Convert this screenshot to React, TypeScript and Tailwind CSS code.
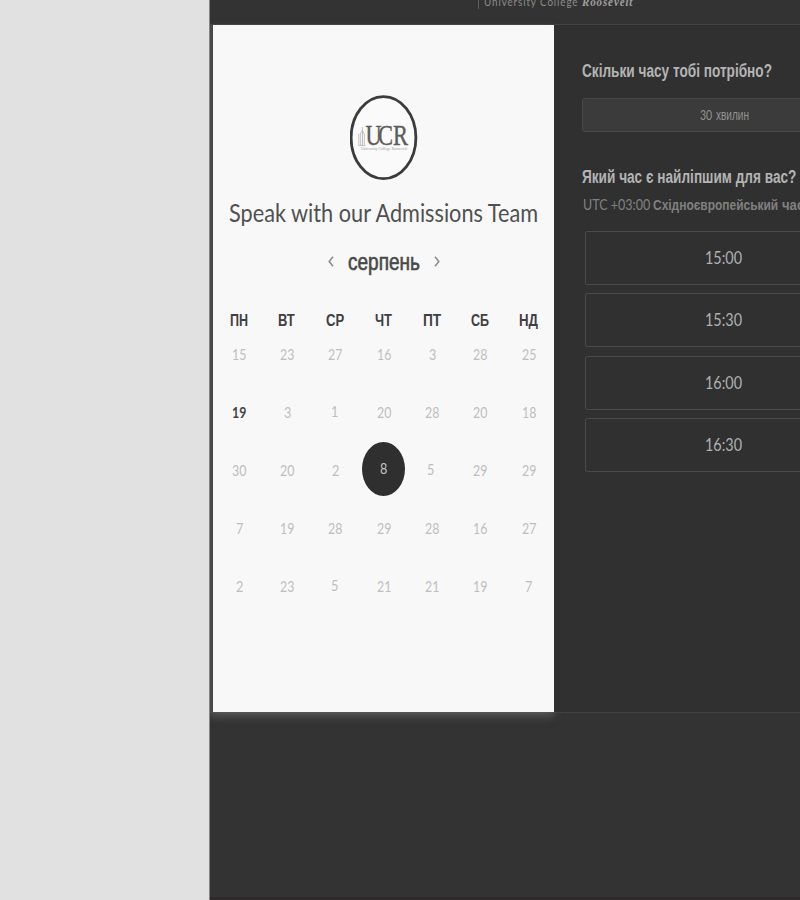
import { useLayoutEffect, useRef, useState, type ReactNode } from "react";

/** Condenses a line of text so that it takes exactly `w` pixels. */
function Fit({ w, className = "", children }: { w: number; className?: string; children: ReactNode }) {
  const ref = useRef<HTMLSpanElement>(null);
  const [scale, setScale] = useState(1);
  useLayoutEffect(() => {
    if (ref.current) setScale(w / ref.current.offsetWidth);
  }, [w]);
  return (
    <span className="inline-block shrink-0 whitespace-nowrap text-left" style={{ width: w }}>
      <span ref={ref} className={`inline-block origin-left ${className}`} style={{ transform: `scaleX(${scale})` }}>
        {children}
      </span>
    </span>
  );
}

const latin = "font-['Lato','Liberation_Sans',sans-serif]";
const cyr = "font-['Liberation_Sans',Arial,sans-serif]";

const weekdays: [string, number][] = [
  ["ПН", 18], ["ВТ", 17], ["СР", 18], ["ЧТ", 17], ["ПТ", 18], ["СБ", 18], ["НД", 19],
];

const weeks = [
  [15, 23, 27, 16, 3, 28, 25],
  [19, 3, 1, 20, 28, 20, 18],
  [30, 20, 2, 8, 5, 29, 29],
  [7, 19, 28, 29, 28, 16, 27],
  [2, 23, 5, 21, 21, 19, 7],
];

const slots = ["15:00", "15:30", "16:00", "16:30"];

function Day({ value, row }: { value: number; row: number }) {
  const w = value > 9 ? 14.5 : 7;
  if (value === 8) {
    return (
      <div className="flex h-[58px] items-center justify-center">
        <div className="-mt-[4px] flex h-[54px] w-[43px] items-center justify-center rounded-[50%] bg-[#2f2f2f] text-[#c4c4c4]">
          <Fit w={w}>{value}</Fit>
        </div>
      </div>
    );
  }
  const tone = value === 19 && row === 1 ? "font-bold text-[#444444]" : "text-[#bebebe]";
  const nudge = value === 5 || value === 1 ? "pb-[2px] pr-[2px]" : "pb-px pl-px";
  return (
    <div className={`flex h-[58px] items-center justify-center ${tone} ${nudge}`}>
      <Fit w={w}>{value}</Fit>
    </div>
  );
}

function Logo() {
  return (
    <svg width="68" height="86" viewBox="0 0 68 86" className="block">
      <ellipse cx="33.5" cy="42.7" rx="32.4" ry="41" fill="#fafafa" stroke="#3b3b3b" strokeWidth="2.8" />
      <g stroke="#b4b4b4" strokeWidth="0.8" fill="none">
        <path d="M12.3 32v6M10 39.5l2.3-4 2.3 4M8.8 39v11M10.7 39v12M12.5 37v14M14.3 39v12M8.5 50.5h7" />
      </g>
      <g fill="#5c5c5c" stroke="#5c5c5c" strokeWidth="0.4" fontSize="29" fontFamily="Liberation Serif, serif">
        <text x="15.5" y="49.5" textLength="16" lengthAdjust="spacingAndGlyphs">U</text>
        <text x="28" y="49.5" textLength="15" lengthAdjust="spacingAndGlyphs">C</text>
        <text x="43" y="49.5" textLength="15" lengthAdjust="spacingAndGlyphs">R</text>
      </g>
      <text x="11" y="54.5" textLength="46" lengthAdjust="spacingAndGlyphs" fill="#999" fontSize="4.6" fontFamily="Liberation Serif, serif">University College Roosevelt</text>
    </svg>
  );
}

export default function App() {
  return (
    <div className={`flex h-[900px] w-[800px] overflow-hidden bg-[#e1e1e1] ${latin}`}>
      <div className="w-[209px] shrink-0" />
      <main className="flex w-[591px] shrink-0 flex-col overflow-hidden border-l border-[#858585] bg-[#333333]">
        <header className="flex h-[24px] shrink-0 items-start overflow-hidden pl-[268px] text-[11px] leading-[14px] text-[#8c8c8c]">
          <div className="-mt-[5px] flex items-baseline">
            <span className="mr-[5px] w-px self-stretch bg-[#5c5c5c]" />
            <Fit w={94} className="tracking-[1px]">University College</Fit>
            <Fit w={51} className="ml-1 font-['Liberation_Serif',serif] text-[13px] font-bold italic tracking-[1px] text-[#a0a0a0]">Roosevelt</Fit>
          </div>
        </header>

        <div className="flex h-[689px] shrink-0 border-y border-[#434343]">
          <section className="flex w-[344px] shrink-0 flex-col items-center border-l-[3px] border-[#484848] bg-[#f8f8f8] shadow-[0_4px_8px_#5a5a5a]">
            <div className="mt-[70px]">
              <Logo />
            </div>
            <h1 className="mt-[15px] flex h-[32px] items-center text-[25px] leading-[32px] text-[#505050]">
              <Fit w={309}>Speak with our Admissions Team</Fit>
            </h1>
            <div className="mt-[18px] flex h-[32px] w-full items-center justify-center gap-[14px] text-[#8d8d8d]">
              <svg width="6" height="11" viewBox="0 0 6 11" fill="none" stroke="currentColor" strokeWidth="1.6" className="-mt-px"><path d="M5 .8 1.2 5.5 5 10.2" /></svg>
              <Fit w={72} className={`${cyr} text-[23px] leading-[32px] text-[#484848] [-webkit-text-stroke:0.6px_#484848]`}>серпень</Fit>
              <svg width="6" height="11" viewBox="0 0 6 11" fill="none" stroke="currentColor" strokeWidth="1.6" className="-mt-px"><path d="M1 .8 4.8 5.5 1 10.2" /></svg>
            </div>
            <div className={`mt-[33px] grid h-[20px] w-[338px] grid-cols-7 ${cyr} text-[16px] font-bold leading-[20px] text-[#404040]`}>
              {weekdays.map(([d, w]) => (
                <div key={d} className="flex justify-center"><Fit w={w}>{d}</Fit></div>
              ))}
            </div>
            <div className="-mt-[5px] grid w-[338px] grid-cols-7 text-[14.5px] leading-[18px]">
              {weeks.map((week, r) => week.map((v, c) => <Day key={`${r}-${c}`} value={v} row={r} />))}
            </div>
          </section>

          <section className="flex w-[320px] shrink-0 flex-col bg-[#303030] pl-[28px]">
            <h2 className={`mt-[35px] h-[22px] ${cyr} text-[17.5px] font-bold leading-[22px] text-[#b4b4b4]`}>
              <Fit w={190}>Скільки часу тобі потрібно?</Fit>
            </h2>
            <div className="mt-[16px] flex h-[34px] w-[285px] items-center justify-center gap-[4px] rounded-[3px] border border-[#484848] bg-[#3b3b3b] text-[14px] leading-[18px] text-[#949494]">
              <Fit w={12}>30</Fit>
              <Fit w={33} className={cyr}>хвилин</Fit>
            </div>
            <h2 className={`mt-[34px] h-[22px] ${cyr} text-[17.5px] font-bold leading-[22px] text-[#b4b4b4]`}>
              <Fit w={214}>Який час є найліпшим для вас?</Fit>
            </h2>
            <div className="mt-[5px] flex h-[22px] items-baseline pl-px text-[15.5px] leading-[22px] text-[#808080]">
              <Fit w={67}>UTC +03:00</Fit>
              <span className={`flex pl-[3px] ${cyr} font-bold`}>
                <Fit w={125}>Східноєвропейський</Fit>
                <span className="w-[4px]" />
                <Fit w={22}>час</Fit>
              </span>
            </div>
            <div className="mt-[16px] flex flex-col gap-[8.4px] pl-[3px]">
              {slots.map((s) => (
                <div key={s} className="flex h-[54px] w-[276px] items-center justify-center rounded-[2px] border border-[#4a4a4a] text-[17.5px] leading-[24px] text-[#b0b0b0]">
                  <Fit w={37}>{s}</Fit>
                </div>
              ))}
            </div>
          </section>
        </div>
        <div className="mt-auto h-[3px] bg-[#2d292b]" />
      </main>
    </div>
  );
}
